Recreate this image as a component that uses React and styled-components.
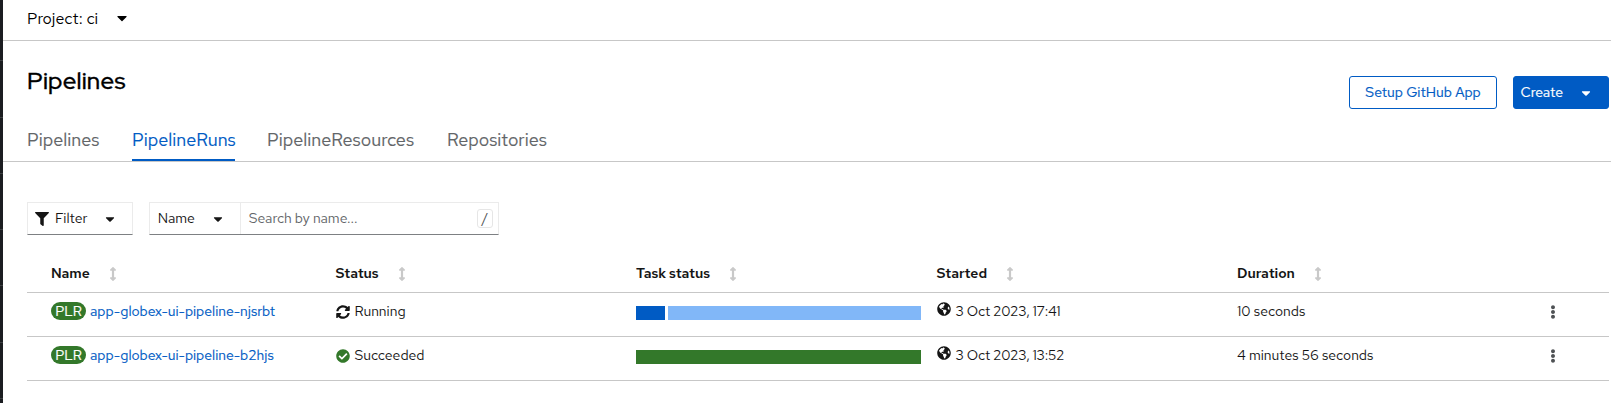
import React from 'react';
import styled, { createGlobalStyle } from 'styled-components';
import {
  FaFilter,
  FaCaretDown,
  FaSyncAlt,
  FaCheckCircle,
  FaGlobeAmericas,
  FaEllipsisV,
  FaArrowsAltV,
} from 'react-icons/fa';

const GlobalStyle = createGlobalStyle`
  *, *::before, *::after { box-sizing: border-box; }
  body {
    margin: 0;
    background: #fff;
    color: #151515;
    font-family: 'Red Hat Text', Lato, 'Noto Sans', sans-serif;
    font-size: 14px;
    line-height: 21px;
  }
  button, input { font: inherit; color: inherit; }
  svg { display: block; flex: none; }
`;

const Page = styled.div`
  display: flex;
  height: 403px;
  overflow: hidden;
`;

const NavEdge = styled.aside`
  flex: 0 0 3px;
  display: flex;
  flex-direction: column;
  padding-top: 5px;
  background: #1b1d21;
`;

const NavSlot = styled.div`
  flex: 0 0 56.3px;
  border-bottom: 1px solid #3c3f42;
`;

const Main = styled.main`
  flex: 1;
  min-width: 0;
  display: flex;
  flex-direction: column;
`;

const Text = styled.span`
  letter-spacing: ${(p) => (p.$track ? `${p.$track}px` : 'normal')};
  white-space: nowrap;
`;

const ProjectBar = styled.div`
  flex: 0 0 41px;
  display: flex;
  align-items: center;
  gap: 16px;
  padding: 0 0 4px 24px;
  border-bottom: 1px solid #c7c7c7;
  font-size: 16px;
  color: #000;
`;

const Heading = styled.header`
  flex: 0 0 82px;
  display: flex;
  justify-content: space-between;
  align-items: flex-start;
  padding: 24px 2px 0 24px;
`;

const Title = styled.h1`
  margin: 0;
  font-family: 'Red Hat Display', 'Red Hat Text', Lato, sans-serif;
  font-size: 24px;
  font-weight: 500;
  line-height: 31px;
  letter-spacing: 0.2px;
  color: #000;
  -webkit-text-stroke: 0.3px;
`;

const Actions = styled.div`
  display: flex;
  gap: 16px;
  padding-top: 11px;
`;

const ActionButton = styled.button`
  display: flex;
  align-items: center;
  justify-content: ${(p) => (p.$primary ? 'flex-start' : 'center')};
  gap: 16.5px;
  width: ${(p) => (p.$primary ? 96 : 148)}px;
  height: 33px;
  padding: ${(p) => (p.$primary ? '0 0 0 6.5px' : 0)};
  border: 1px solid #005bc4;
  border-radius: 3px;
  background: ${(p) => (p.$primary ? '#005bc4' : '#fff')};
  color: ${(p) => (p.$primary ? '#fff' : '#005bc4')};
  -webkit-text-stroke: 0.2px;
`;

const Tabs = styled.nav`
  flex: 0 0 39px;
  display: flex;
  gap: 32px;
  padding-left: 24px;
  border-bottom: 1px solid #c7c7c7;
`;

const Tab = styled.a`
  width: ${(p) => p.$width}px;
  height: 38px;
  padding-top: 3px;
  border-bottom: ${(p) => (p.$active ? '2px solid #005bc4' : '0')};
  color: ${(p) => (p.$active ? '#005bc4' : '#626568')};
  font-size: 18px;
  line-height: 27px;
  -webkit-text-stroke: 0.15px;
`;

const Toolbar = styled.div`
  display: flex;
  gap: 16px;
  padding: 40px 0 0 24px;
`;

const Control = styled.div`
  display: flex;
  align-items: center;
  height: 33px;
  width: ${(p) => p.$width}px;
  border: 1px solid #ebebeb;
  border-bottom-color: #7d8083;
`;

const FilterButton = styled(Control)`
  padding-left: 7px;
  gap: 6px;
`;

const Caret = styled(FaCaretDown)`
  margin-left: ${(p) => p.$offset || 0}px;
`;

const Attribute = styled.div`
  display: flex;
  align-items: center;
  width: 91px;
  height: 100%;
  padding-left: 7.7px;
  border-right: 1px solid #ebebeb;
`;

const SearchField = styled.div`
  flex: 1;
  display: flex;
  align-items: center;
  justify-content: space-between;
  padding: 0 5px 0 7.7px;
  color: #626568;
`;

const KeyHint = styled.kbd`
  width: 16px;
  height: 19px;
  border: 1px solid #e6e6e6;
  border-radius: 3px;
  font: inherit;
  line-height: 17px;
  text-align: center;
  color: #4f5255;
`;

const Table = styled.section`
  margin: 15px 2px 0 24px;
`;

const TableRow = styled.div`
  display: grid;
  grid-template-columns: 284.5px 300.5px 300.5px 300.5px 309px 1fr;
  height: ${(p) => (p.$head ? 43 : 44)}px;
  padding: ${(p) => (p.$head ? '13px' : '8px')} 0 0 24px;
  border-bottom: 1px solid #c7c7c7;
  font-weight: ${(p) => (p.$head ? 600 : 400)};
`;

const Cell = styled.div`
  display: flex;
  align-items: center;
  height: 21px;
  gap: ${(p) => p.$gap || 0}px;
`;

const SortIcon = styled(FaArrowsAltV)`
  color: #c9c9c9;
`;

const Badge = styled.span`
  width: 35px;
  height: 18px;
  margin-bottom: 1px;
  border-radius: 9px;
  background: #33782a;
  color: #fff;
  line-height: 18px;
  text-align: center;
  -webkit-text-stroke: 0.2px;
`;

const Link = styled.a`
  color: #005bc4;
  white-space: nowrap;
  letter-spacing: -0.02px;
  -webkit-text-stroke: 0.15px;
`;

const Progress = styled.div`
  display: flex;
  gap: 3px;
  width: 285px;
  height: 14px;
  margin-top: 5px;
`;

const Segment = styled.span`
  flex: ${(p) => p.$grow} 1 0;
  background: ${(p) => p.$color};
`;

const Globe = styled(FaGlobeAmericas)`
  margin-bottom: 5px;
`;

const columns = ['Name', 'Status', 'Task status', 'Started', 'Duration'];

const tabs = [
  { label: 'Pipelines', width: 73 },
  { label: 'PipelineRuns', width: 103, active: true },
  { label: 'PipelineResources', width: 148 },
  { label: 'Repositories', width: 100 },
];

const runs = [
  {
    name: 'app-globex-ui-pipeline-njsrbt',
    icon: <FaSyncAlt />,
    status: 'Running',
    segments: [[29, '#005bc4'], [253, '#81b7f8']],
    started: '3 Oct 2023, 17:41',
    duration: '10 seconds',
  },
  {
    name: 'app-globex-ui-pipeline-b2hjs',
    icon: <FaCheckCircle color="#33782a" />,
    status: 'Succeeded',
    segments: [[1, '#33782a']],
    started: '3 Oct 2023, 13:52',
    duration: '4 minutes 56 seconds',
  },
];

export default function App() {
  return (
    <Page>
      <GlobalStyle />
      <NavEdge>
        {[0, 1, 2, 3, 4, 5, 6].map((n) => (
          <NavSlot key={n} />
        ))}
      </NavEdge>
      <Main>
        <ProjectBar>
          <Text>Project: ci</Text>
          <Caret size={16} />
        </ProjectBar>
        <Heading>
          <Title>Pipelines</Title>
          <Actions>
            <ActionButton>
              <Text>Setup GitHub App</Text>
            </ActionButton>
            <ActionButton $primary>
              <Text>Create</Text>
              <Caret size={14} />
            </ActionButton>
          </Actions>
        </Heading>
        <Tabs>
          {tabs.map((t) => (
            <Tab key={t.label} $width={t.width} $active={t.active}>
              <Text>{t.label}</Text>
            </Tab>
          ))}
        </Tabs>
        <Toolbar>
          <FilterButton $width={106}>
            <FaFilter size={14} />
            <Text>Filter</Text>
            <Caret size={14} $offset={10} />
          </FilterButton>
          <Control $width={350}>
            <Attribute>
              <Text>Name</Text>
              <Caret size={14} $offset={16} />
            </Attribute>
            <SearchField>
              <Text $track={-0.05}>Search by name...</Text>
              <KeyHint>/</KeyHint>
            </SearchField>
          </Control>
        </Toolbar>
        <Table>
          <TableRow $head>
            {columns.map((label) => (
              <Cell key={label} $gap={16}>
                <Text $track={-0.04}>{label}</Text>
                <SortIcon size={14} />
              </Cell>
            ))}
          </TableRow>
          {runs.map((r) => (
            <TableRow key={r.name}>
              <Cell $gap={4}>
                <Badge>
                  <Text>PLR</Text>
                </Badge>
                <Link>{r.name}</Link>
              </Cell>
              <Cell $gap={5}>
                {r.icon}
                <Text>{r.status}</Text>
              </Cell>
              <Progress>
                {r.segments.map(([grow, color]) => (
                  <Segment key={color} $grow={grow} $color={color} />
                ))}
              </Progress>
              <Cell $gap={5}>
                <Globe />
                <Text $track={-0.2}>{r.started}</Text>
              </Cell>
              <Cell>
                <Text>{r.duration}</Text>
              </Cell>
              <Cell>
                <FaEllipsisV color="#4f5255" />
              </Cell>
            </TableRow>
          ))}
        </Table>
      </Main>
    </Page>
  );
}
